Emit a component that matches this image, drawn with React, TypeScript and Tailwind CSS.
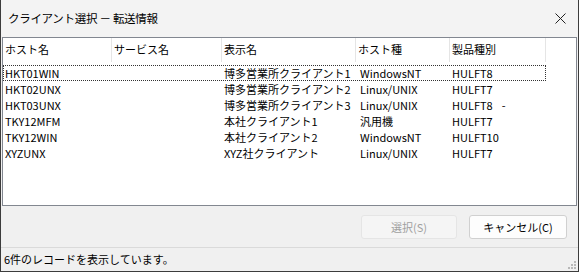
import React from "react";

const rows = [
  ["HKT01WIN", "", "博多営業所クライアント1", "WindowsNT", "HULFT8"],
  ["HKT02UNX", "", "博多営業所クライアント2", "Linux/UNIX", "HULFT7"],
  ["HKT03UNX", "", "博多営業所クライアント3", "Linux/UNIX", "HULFT8"],
  ["TKY12MFM", "", "本社クライアント1", "汎用機", "HULFT7"],
  ["TKY12WIN", "", "本社クライアント2", "WindowsNT", "HULFT10"],
  ["XYZUNX", "", "XYZ社クライアント", "Linux/UNIX", "HULFT7"],
];

const cols = [109, 110, 134, 94, 96];
const headers = ["ホスト名", "サービス名", "表示名", "ホスト種", "製品種別"];

export default function App() {
  return (
    <div
      className="w-[579px] h-[272px] bg-[#f0f0f0] border border-[#3c3c3c] border-t-0 flex flex-col text-[11px] text-black overflow-hidden"
      style={{ fontFamily: '"Noto Sans CJK JP", "Noto Sans", sans-serif' }}
    >
      {/* title bar */}
      <div className="h-[37px] shrink-0 bg-[#f3f3f3] flex items-center justify-between pl-[7px] pr-[10px]">
        <span className="text-[11.5px] leading-none tracking-[-0.3px]">クライアント選択 － 転送情報</span>
        <svg width="11" height="11" viewBox="0 0 11 11" className="mr-[2px]">
          <path d="M0.5 0.5 L10.5 10.5 M10.5 0.5 L0.5 10.5" stroke="#222" strokeWidth="1" />
        </svg>
      </div>
      {/* list */}
      <div className="mx-[1px] h-[169px] shrink-0 bg-white border border-[#828790] flex flex-col">
        <div className="h-[24px] flex shrink-0">
          {headers.map((h, i) => (
            <div
              key={i}
              style={{ width: cols[i] }}
              className="h-full border-r border-[#e5e5e5] flex items-center pl-[2px] pb-[2px] leading-none"
            >
              {h}
            </div>
          ))}
          <div className="flex-1" />
        </div>
        <div className="flex flex-col pt-[3px]">
          {rows.map((r, ri) => (
            <div key={ri} className="relative h-[16px] flex items-center leading-none">
              {ri === 0 && (
                <div className="absolute left-0 top-0 bottom-0 w-[543px] border border-dotted border-[#333]" />
              )}
              {r.map((c, ci) => (
                <div
                  key={ci}
                  style={{ width: cols[ci] }}
                  className={ci === 3 ? "pl-[4px] whitespace-nowrap" : "pl-[2px] whitespace-nowrap"}
                >
                  {c}
                  {ri === 2 && ci === 4 && <span className="ml-[9px]">-</span>}
                </div>
              ))}
            </div>
          ))}
        </div>
      </div>
      {/* buttons */}
      <div className="h-[41px] shrink-0 flex items-center justify-end gap-[12px] pr-[11px] pt-[1px]">
        <div className="w-[96px] h-[24px] rounded-[3px] border border-[#e5e5e5] bg-[#f5f5f5] text-[#a0a0a0] flex items-center justify-center leading-none">
          選択(S)
        </div>
        <div className="w-[98px] h-[24px] rounded-[3px] border border-[#d0d0d0] bg-[#fdfdfd] flex items-center justify-center leading-none">
          キャンセル(C)
        </div>
      </div>
      {/* status bar */}
      <div className="flex-1 border-t border-[#dadada] flex items-center justify-between pl-[3px] pr-[1px] relative">
        <span className="leading-none">6件のレコードを表示しています。</span>
        <svg width="10" height="10" viewBox="0 0 10 10" className="absolute right-[1px] bottom-[1px]">
          <rect x="7" y="1" width="2" height="2" fill="#b8b8b8" />
          <rect x="4" y="4" width="2" height="2" fill="#b8b8b8" />
          <rect x="7" y="4" width="2" height="2" fill="#b8b8b8" />
          <rect x="1" y="7" width="2" height="2" fill="#b8b8b8" />
          <rect x="4" y="7" width="2" height="2" fill="#b8b8b8" />
          <rect x="7" y="7" width="2" height="2" fill="#b8b8b8" />
        </svg>
      </div>
    </div>
  );
}
